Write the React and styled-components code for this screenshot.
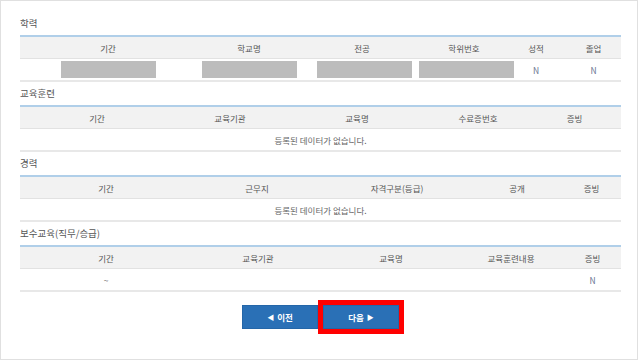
import styled, { createGlobalStyle } from "styled-components";

const GlobalStyle = createGlobalStyle`
  body {
    margin: 0;
    background: #fff;
    font-family: "Noto Sans CJK KR", "Noto Sans", sans-serif;
  }
`;

const Frame = styled.div`
  box-sizing: border-box;
  width: 638px;
  height: 360px;
  border: 1px solid #e0e0e0;
  padding: 11px 15px 0 19px;
  color: #555;
`;

const Section = styled.div``;

const Title = styled.div`
  height: 23px;
  line-height: 23px;
  font-size: 9.5px;
  color: #555;
`;

const Table = styled.div`
  width: 601px;
  border-top: 2px solid #b0cfe9;
  border-bottom: 2px solid #e8e8e8;
`;

const Row = styled.div`
  display: grid;
  grid-template-columns: ${(p) => p.$cols};
  height: 21px;
  background: ${(p) => (p.$head ? "#f2f2f2" : "#fff")};
  border-bottom: ${(p) => (p.$head ? "1px solid #e2e2e2" : "none")};
`;

const Cell = styled.div`
  display: flex;
  align-items: center;
  justify-content: center;
  font-size: 8.5px;
  color: ${(p) => (p.$flag ? "#6a7592" : p.$head ? "#555" : "#666")};
  white-space: nowrap;
`;

const Empty = styled.div`
  grid-column: 1 / -1;
  display: flex;
  align-items: center;
  justify-content: center;
  font-size: 8.5px;
  color: #666;
`;

const Mask = styled.div`
  flex: none;
  width: 95px;
  height: 17px;
  background: #bcbcbc;
  transform: translateX(${(p) => p.$shift || 0}px);
`;

const Buttons = styled.div`
  display: flex;
  justify-content: center;
  gap: 5px;
  margin-top: 13px;
  padding-right: 1px;
`;

const Button = styled.button`
  width: 76px;
  height: 24px;
  border: 1px solid #2466a8;
  background: #2a70b6;
  color: #fff;
  font-family: inherit;
  font-size: 8.5px;
  font-weight: 700;
  padding: 0;
  display: flex;
  align-items: center;
  justify-content: center;
  gap: 3px;
  outline: ${(p) => (p.$active ? "5px solid #ff0000" : "none")};
  cursor: pointer;
`;

const Arrow = styled.span`
  font-size: 7px;
`;

const sections = [
  {
    title: "학력",
    cols: "176px 106px 120px 84px 60px 55px",
    head: ["기간", "학교명", "전공", "학위번호", "성적", "졸업"],
    rows: [["#", "#", "#2", "#2", "N", "N"]],
  },
  {
    title: "교육훈련",
    cols: "154px 112px 142px 100px 93px",
    head: ["기간", "교육기관", "교육명", "수료증번호", "증빙"],
    rows: null,
  },
  {
    title: "경력",
    cols: "172px 130px 150px 90px 59px",
    head: ["기간", "근무지", "자격구분(등급)", "공개", "증빙"],
    rows: null,
  },
  {
    title: "보수교육(직무/승급)",
    cols: "172px 132px 134px 106px 57px",
    head: ["기간", "교육기관", "교육명", "교육훈련내용", "증빙"],
    rows: [["~", "", "", "", "N"]],
  },
];

export default function App() {
  return (
    <>
      <GlobalStyle />
      <Frame>
        {sections.map((s) => (
          <Section key={s.title}>
            <Title>{s.title}</Title>
            <Table>
              <Row $head $cols={s.cols}>
                {s.head.map((h) => (
                  <Cell $head key={h}>
                    {h}
                  </Cell>
                ))}
              </Row>
              {s.rows ? (
                s.rows.map((r, ri) => (
                  <Row $cols={s.cols} key={ri}>
                    {r.map((v, i) => (
                      <Cell key={i} $flag={v === "N"}>
                        {v === "#" ? <Mask /> : v === "#2" ? <Mask $shift={2} /> : v}
                      </Cell>
                    ))}
                  </Row>
                ))
              ) : (
                <Row $cols={s.cols}>
                  <Empty>등록된 데이터가 없습니다.</Empty>
                </Row>
              )}
            </Table>
          </Section>
        ))}
        <Buttons>
          <Button>
            <Arrow>◀</Arrow>이전
          </Button>
          <Button $active>
            다음<Arrow>▶</Arrow>
          </Button>
        </Buttons>
      </Frame>
    </>
  );
}
